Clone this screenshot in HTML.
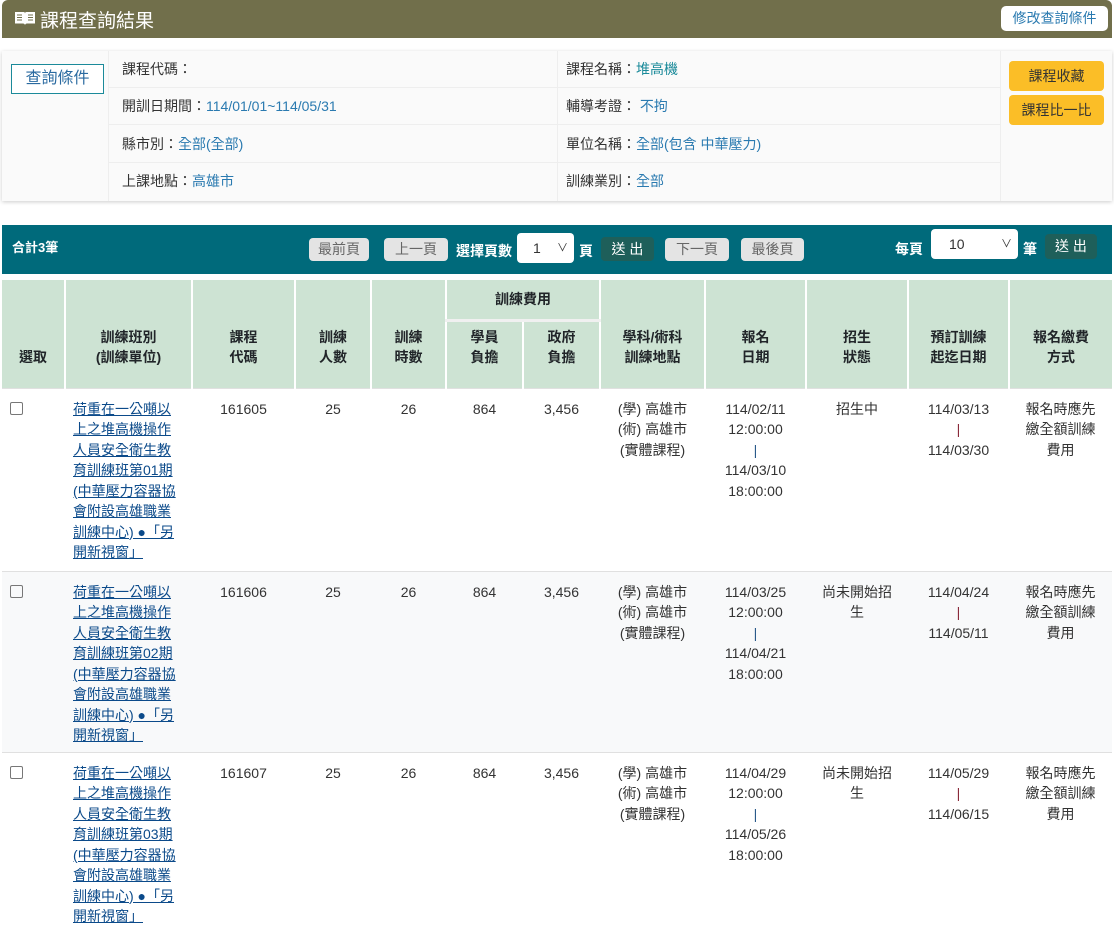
<!DOCTYPE html>
<html><head><meta charset="utf-8"><style>
*{box-sizing:border-box;margin:0;padding:0}
body{width:1114px;height:927px;overflow:hidden;background:#fff;font-family:"Liberation Sans","Noto Sans CJK TC",sans-serif;font-size:14px;color:#333}
.top{position:absolute;left:2px;top:0;width:1110px;height:38px;background:#716f4b;border-radius:6px 6px 0 0;color:#fff}
.top .t{position:absolute;left:38px;top:6px;font-size:19px;}
.top .ic{position:absolute;left:13px;top:11px;width:20px;height:14px}
.top .b{position:absolute;right:4px;top:6px;height:25px;width:107px;background:#fff;border-radius:5px;color:#2a7ab0;font-size:14px;text-align:center;line-height:25px}
.panel{position:absolute;left:2px;top:51px;width:1110px;height:150px;background:#fafafa;box-shadow:0 1px 4px rgba(0,0,0,.2)}
.qbtn{position:absolute;left:9px;top:13px;width:93px;height:30px;border:1px solid #1b8a9a;color:#2a6aa0;font-size:16px;text-align:center;line-height:28px;background:#fff}
.cell{position:absolute;height:37px;line-height:37px;border-bottom:1px solid #eee;padding-left:14px;color:#333}
.cell span{color:#2a7ab0}
.vl{position:absolute;top:0;height:150px;border-left:1px solid #eee}
.yb{position:absolute;left:1007px;width:95px;height:30px;background:#fbbe27;border-radius:4px;text-align:center;line-height:30px;color:#333}
.bar{position:absolute;left:2px;top:225px;width:1110px;height:49px;background:#006a7b;color:#fff;font-weight:bold;font-size:14px}
.gb{position:absolute;top:13px;height:23px;background:#e4e4e4;color:#666;border-radius:4px;text-align:center;line-height:23px;font-weight:normal;font-size:14px}
.db{position:absolute;height:24px;background:#1e5f5a;color:#fff;border-radius:4px;text-align:center;line-height:24px;font-weight:normal}
.sel{position:absolute;height:30px;background:#fff;border-radius:4px;color:#333;font-weight:normal;line-height:30px;padding-left:16px}
.sel i{position:absolute;right:6px;top:0;font-style:normal;font-size:11px}
table{position:absolute;left:2px;top:280px;width:1110px;border-collapse:collapse;table-layout:fixed}
th{background:#cde3d3;font-weight:bold;color:#212529;text-align:center;border-left:2px solid #fff;line-height:20.5px;vertical-align:bottom;padding-bottom:20px}
th.f{vertical-align:middle;padding:0;height:40px;border-bottom:3px solid #f0f0f0}
th.s{padding-top:0}
td{vertical-align:top;text-align:center;line-height:20.5px;padding-top:10px;border-top:1px solid #e0e0e0}
td a{color:#0b4a8a;text-decoration:underline}
td.l{text-align:left;padding-left:8px;padding-right:8px}
td.c{padding-left:14px;padding-right:14px}
.cb{display:inline-block;width:13px;height:13px;border:1px solid #777;border-radius:2px;margin-top:3px;margin-left:0}
.g td{background:#f8f9fa}
.p1{color:#2a5a8a}.p2{color:#8a2a3a}
</style></head><body>
<div class="top"><svg class="ic" viewBox="0 0 20 14"><path d="M0 1h8.5q1.5 0 1.5 1.5V14q-.5-1.5-2-1.5H0zM20 1h-8.5Q10 1 10 2.5V14q.5-1.5 2-1.5H20z" fill="#fff"/><path d="M2 4h5M2 6.5h5M2 9h5M13 4h5M13 6.5h5M13 9h5" stroke="#716f4b" stroke-width="1"/></svg><div class="t">課程查詢結果</div><div class="b">修改查詢條件</div></div>
<div class="panel">
<div class="qbtn">查詢條件</div>
<div class="vl" style="left:106px"></div><div class="vl" style="left:555px"></div><div class="vl" style="left:998px"></div>
<div class="cell" style="left:106px;top:0;width:449px">課程代碼：</div>
<div class="cell" style="left:106px;top:37px;width:449px">開訓日期間：<span>114/01/01~114/05/31</span></div>
<div class="cell" style="left:106px;top:75px;width:449px">縣市別：<span>全部(全部)</span></div>
<div class="cell" style="left:106px;top:112px;width:449px;border:0">上課地點：<span>高雄市</span></div>
<div class="cell" style="left:550px;top:0;width:448px">課程名稱：<span style="color:#1a8a9a">堆高機</span></div>
<div class="cell" style="left:550px;top:37px;width:448px">輔導考證： <span>不拘</span></div>
<div class="cell" style="left:550px;top:75px;width:448px">單位名稱：<span>全部(包含 中華壓力)</span></div>
<div class="cell" style="left:550px;top:112px;width:448px;border:0">訓練業別：<span>全部</span></div>
<div class="yb" style="top:10px">課程收藏</div>
<div class="yb" style="top:44px">課程比一比</div>
</div>
<div class="bar">
<div style="position:absolute;left:10px;top:12px;font-size:13px">合計3筆</div>
<div class="gb" style="left:307px;width:60px">最前頁</div>
<div class="gb" style="left:382px;width:64px">上一頁</div>
<div style="position:absolute;left:454px;top:16px">選擇頁數</div>
<div class="sel" style="left:515px;top:8px;width:57px">1<i>∨</i></div>
<div style="position:absolute;left:577px;top:16px">頁</div>
<div class="db" style="left:599px;top:12px;width:53px">送 出</div>
<div class="gb" style="left:663px;width:64px">下一頁</div>
<div class="gb" style="left:739px;width:63px">最後頁</div>
<div style="position:absolute;left:893px;top:14px">每頁</div>
<div class="sel" style="left:929px;top:4px;width:87px;padding-left:18px">10<i>∨</i></div>
<div style="position:absolute;left:1021px;top:14px">筆</div>
<div class="db" style="left:1043px;top:9px;width:52px;height:25px">送 出</div>
</div>
<table>
<colgroup><col style="width:63px"><col style="width:127px"><col style="width:103px"><col style="width:76px"><col style="width:75px"><col style="width:77px"><col style="width:77px"><col style="width:105px"><col style="width:101px"><col style="width:102px"><col style="width:101px"><col style="width:103px"></colgroup>
<tr><th rowspan="2" style="border-left:0;height:108px">選取</th><th rowspan="2">訓練班別<br>(訓練單位)</th><th rowspan="2">課程<br>代碼</th><th rowspan="2">訓練<br>人數</th><th rowspan="2">訓練<br>時數</th><th colspan="2" class="f">訓練費用</th><th rowspan="2">學科/術科<br>訓練地點</th><th rowspan="2">報名<br>日期</th><th rowspan="2">招生<br>狀態</th><th rowspan="2">預訂訓練<br>起迄日期</th><th rowspan="2">報名繳費<br>方式</th></tr>
<tr><th class="s" style="height:68px">學員<br>負擔</th><th class="s">政府<br>負擔</th></tr>
<tr style="height:183px"><td class="l"><span class="cb"></span></td><td class="l"><a>荷重在一公噸以上之堆高機操作人員安全衛生教育訓練班第01期(中華壓力容器協會附設高雄職業訓練中心) ●「另開新視窗」</a></td><td>161605</td><td>25</td><td>26</td><td>864</td><td>3,456</td><td>(學) 高雄市<br>(術) 高雄市<br>(實體課程)</td><td>114/02/11<br>12:00:00<br><span class="p1">|</span><br>114/03/10<br>18:00:00</td><td class="c">招生中</td><td>114/03/13<br><span class="p2">|</span><br>114/03/30</td><td class="c">報名時應先繳全額訓練費用</td></tr>
<tr class="g" style="height:181px"><td class="l"><span class="cb"></span></td><td class="l"><a>荷重在一公噸以上之堆高機操作人員安全衛生教育訓練班第02期(中華壓力容器協會附設高雄職業訓練中心) ●「另開新視窗」</a></td><td>161606</td><td>25</td><td>26</td><td>864</td><td>3,456</td><td>(學) 高雄市<br>(術) 高雄市<br>(實體課程)</td><td>114/03/25<br>12:00:00<br><span class="p1">|</span><br>114/04/21<br>18:00:00</td><td class="c">尚未開始招生</td><td>114/04/24<br><span class="p2">|</span><br>114/05/11</td><td class="c">報名時應先繳全額訓練費用</td></tr>
<tr style="height:181px"><td class="l"><span class="cb"></span></td><td class="l"><a>荷重在一公噸以上之堆高機操作人員安全衛生教育訓練班第03期(中華壓力容器協會附設高雄職業訓練中心) ●「另開新視窗」</a></td><td>161607</td><td>25</td><td>26</td><td>864</td><td>3,456</td><td>(學) 高雄市<br>(術) 高雄市<br>(實體課程)</td><td>114/04/29<br>12:00:00<br><span class="p1">|</span><br>114/05/26<br>18:00:00</td><td class="c">尚未開始招生</td><td>114/05/29<br><span class="p2">|</span><br>114/06/15</td><td class="c">報名時應先繳全額訓練費用</td></tr>
</table>
</body></html>
